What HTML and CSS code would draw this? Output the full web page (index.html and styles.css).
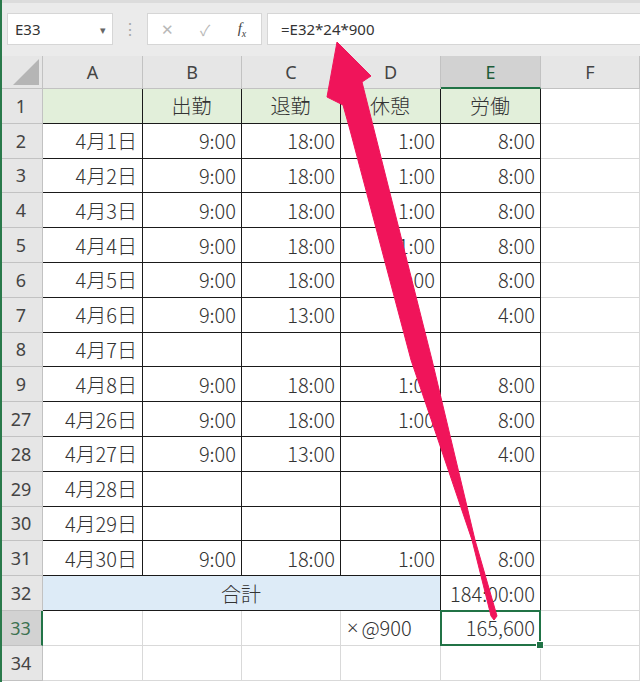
FILE: index.html
```html
<!DOCTYPE html>
<html lang="ja">
<head>
    <meta charset="UTF-8">
    <title>勤務時間</title>
    <link rel="stylesheet" href="styles.css">
</head>
<body>
<div class="app">
    <div class="formula-bar">
        <div class="name-box">E33<span class="drop">&#9662;</span></div>
        <div class="dots">&#8942;</div>
        <div class="fx-box">
            <span class="fx-btn">&#10005;</span>
            <span class="fx-btn check">&#10003;</span>
            <span class="fx-label">f<sub>x</sub></span>
        </div>
        <div class="formula">=E32*24*900</div>
    </div>

    <div class="sheet">
        <!-- column headers -->
        <div class="corner"><svg width="26" height="26" viewBox="0 0 26 26"><polygon points="26,0 26,26 0,26" fill="#b5b5b5"/></svg></div>
        <div class="ch">A</div>
        <div class="ch">B</div>
        <div class="ch">C</div>
        <div class="ch">D</div>
        <div class="ch active">E</div>
        <div class="ch">F</div>

        <div class="rh">1</div>
        <div class="cell box head"></div>
        <div class="cell box head">出勤</div>
        <div class="cell box head">退勤</div>
        <div class="cell box head">休憩</div>
        <div class="cell box head">労働</div>
        <div class="cell"></div>

        <div class="rh">2</div>
        <div class="cell box">4月1日</div>
        <div class="cell box">9:00</div>
        <div class="cell box">18:00</div>
        <div class="cell box">1:00</div>
        <div class="cell box">8:00</div>
        <div class="cell"></div>

        <div class="rh">3</div>
        <div class="cell box">4月2日</div>
        <div class="cell box">9:00</div>
        <div class="cell box">18:00</div>
        <div class="cell box">1:00</div>
        <div class="cell box">8:00</div>
        <div class="cell"></div>

        <div class="rh">4</div>
        <div class="cell box">4月3日</div>
        <div class="cell box">9:00</div>
        <div class="cell box">18:00</div>
        <div class="cell box">1:00</div>
        <div class="cell box">8:00</div>
        <div class="cell"></div>

        <div class="rh">5</div>
        <div class="cell box">4月4日</div>
        <div class="cell box">9:00</div>
        <div class="cell box">18:00</div>
        <div class="cell box">1:00</div>
        <div class="cell box">8:00</div>
        <div class="cell"></div>

        <div class="rh">6</div>
        <div class="cell box">4月5日</div>
        <div class="cell box">9:00</div>
        <div class="cell box">18:00</div>
        <div class="cell box">1:00</div>
        <div class="cell box">8:00</div>
        <div class="cell"></div>

        <div class="rh">7</div>
        <div class="cell box">4月6日</div>
        <div class="cell box">9:00</div>
        <div class="cell box">13:00</div>
        <div class="cell box"></div>
        <div class="cell box">4:00</div>
        <div class="cell"></div>

        <div class="rh">8</div>
        <div class="cell box">4月7日</div>
        <div class="cell box"></div>
        <div class="cell box"></div>
        <div class="cell box"></div>
        <div class="cell box"></div>
        <div class="cell"></div>

        <div class="rh">9</div>
        <div class="cell box">4月8日</div>
        <div class="cell box">9:00</div>
        <div class="cell box">18:00</div>
        <div class="cell box">1:00</div>
        <div class="cell box">8:00</div>
        <div class="cell"></div>

        <div class="rh">27</div>
        <div class="cell box">4月26日</div>
        <div class="cell box">9:00</div>
        <div class="cell box">18:00</div>
        <div class="cell box">1:00</div>
        <div class="cell box">8:00</div>
        <div class="cell"></div>

        <div class="rh">28</div>
        <div class="cell box">4月27日</div>
        <div class="cell box">9:00</div>
        <div class="cell box">13:00</div>
        <div class="cell box"></div>
        <div class="cell box">4:00</div>
        <div class="cell"></div>

        <div class="rh">29</div>
        <div class="cell box">4月28日</div>
        <div class="cell box"></div>
        <div class="cell box"></div>
        <div class="cell box"></div>
        <div class="cell box"></div>
        <div class="cell"></div>

        <div class="rh">30</div>
        <div class="cell box">4月29日</div>
        <div class="cell box"></div>
        <div class="cell box"></div>
        <div class="cell box"></div>
        <div class="cell box"></div>
        <div class="cell"></div>

        <div class="rh">31</div>
        <div class="cell box">4月30日</div>
        <div class="cell box">9:00</div>
        <div class="cell box">18:00</div>
        <div class="cell box">1:00</div>
        <div class="cell box">8:00</div>
        <div class="cell"></div>

        <div class="rh">32</div>
        <div class="cell box total">合計</div>
        <div class="cell box">184:00:00</div>
        <div class="cell"></div>

        <div class="rh current">33</div>
        <div class="cell"></div>
        <div class="cell"></div>
        <div class="cell"></div>
        <div class="cell left"><span class="times">×</span>@900</div>
        <div class="cell selected">165,600</div>
        <div class="cell"></div>

        <div class="rh">34</div>
        <div class="cell"></div>
        <div class="cell"></div>
        <div class="cell"></div>
        <div class="cell"></div>
        <div class="cell"></div>
        <div class="cell"></div>
    </div>

    <!-- annotation arrow -->
    <svg class="arrow" width="640" height="682" viewBox="0 0 640 682">
        <polygon points="337,42 371,76 362,82 432,360 475,540 497,616 494,620 491,616 472,540 411,360 350,130 343,105 327,97"
                 fill="#f0145a" stroke="#f0145a" stroke-width="1" stroke-linejoin="round"/>
    </svg>
</div>
</body>
</html>
```

FILE: styles.css
```css
body {
    margin: 0;
    padding: 0;
    background-color: #fff;
    font-family: "Noto Sans", "Noto Sans CJK JP", sans-serif;
}

.app {
    position: relative;
    width: 640px;
    height: 682px;
    overflow: hidden;
}

/* green edge of the window */
.app::before {
    content: "";
    position: absolute;
    left: 0;
    top: 0;
    bottom: 0;
    width: 2px;
    background-color: #2a7a4b;
    z-index: 5;
}

.formula-bar {
    display: flex;
    align-items: center;
    height: 56px;
    box-sizing: border-box;
    padding: 10px 0 11px 7px;
    background-color: #ebebeb;
    border-top: 3px solid #dcdcdc;
}

.name-box {
    position: relative;
    width: 106px;
    height: 32px;
    box-sizing: border-box;
    background-color: #fff;
    border: 1px solid #d6d6d6;
    padding-left: 7px;
    font-size: 15px;
    line-height: 31px;
    color: #333;
}

.drop {
    position: absolute;
    right: 6px;
    top: 0;
    font-size: 11px;
    color: #666;
}

.dots {
    width: 34px;
    text-align: center;
    color: #a8a8a8;
    font-size: 16px;
}

.fx-box {
    display: flex;
    align-items: center;
    width: 115px;
    height: 32px;
    box-sizing: border-box;
    background-color: #fff;
    border: 1px solid #d6d6d6;
}

.fx-btn {
    width: 38px;
    text-align: center;
    color: #b8b8b8;
    font-size: 15px;
}

.fx-label {
    width: 36px;
    text-align: center;
    font-family: "Liberation Serif", serif;
    font-style: italic;
    font-size: 15px;
    color: #444;
}

.fx-label sub {
    font-size: 10px;
}

.formula {
    flex: 1;
    height: 32px;
    margin-left: 5px;
    box-sizing: border-box;
    background-color: #fff;
    border: 1px solid #d6d6d6;
    border-right: none;
    padding-left: 13px;
    font-size: 15px;
    line-height: 30px;
    color: #333;
}

.sheet {
    display: grid;
    grid-template-columns: 43px 100px 99px 99px 100px 100px 1fr;
    grid-template-rows: 33px;
    grid-auto-rows: 34.8px;
}

.corner,
.ch,
.rh {
    display: flex;
    align-items: center;
    justify-content: center;
    box-sizing: border-box;
    background-color: #e6e6e6;
    border-right: 1px solid #c2c2c2;
    border-bottom: 1px solid #c2c2c2;
    font-size: 18px;
    color: #444;
}

.corner {
    align-items: flex-end;
    justify-content: flex-end;
    padding: 0 3px 3px 0;
}

.ch.active {
    background-color: #d2d2d2;
    border-bottom: 2px solid #217346;
    color: #1e5c38;
}

.rh.current {
    background-color: #d2d2d2;
    border-right: 2px solid #217346;
    color: #3d7150;
}

.cell {
    display: flex;
    align-items: center;
    justify-content: flex-end;
    box-sizing: border-box;
    padding: 0 5px 0 4px;
    border-right: 1px solid #d9d9d9;
    border-bottom: 1px solid #d9d9d9;
    font-family: "Noto Sans CJK JP", sans-serif;
    font-size: 20px;
    font-weight: 300;
    color: #333;
    white-space: nowrap;
}

.cell.box {
    border-right-color: #1a1a1a;
    border-bottom-color: #1a1a1a;
}

.cell.head {
    justify-content: center;
    background-color: #e2efda;
}

.cell.total {
    grid-column: span 4;
    justify-content: center;
    background-color: #ddebf7;
}

.cell.left {
    justify-content: flex-start;
    padding-left: 6px;
}

.times {
    font-family: "Noto Sans", sans-serif;
    margin-right: 3px;
}

.cell.selected {
    position: relative;
}

.cell.selected::after {
    content: "";
    position: absolute;
    left: -1px;
    top: -1px;
    right: -1px;
    bottom: -1px;
    border: 2px solid #217346;
}

.cell.selected::before {
    content: "";
    position: absolute;
    right: -4px;
    bottom: -4px;
    width: 6px;
    height: 6px;
    background-color: #217346;
    border: 1px solid #fff;
    z-index: 2;
}

.arrow {
    position: absolute;
    left: 0;
    top: 0;
    pointer-events: none;
    z-index: 4;
}
```
